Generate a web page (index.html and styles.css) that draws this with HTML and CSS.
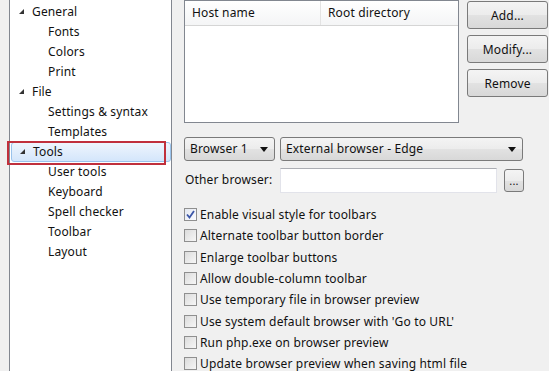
FILE: index.html
```html
<!DOCTYPE html>
<html lang="en">
<head>
<meta charset="UTF-8">
<title>Options</title>
<link rel="stylesheet" href="styles.css">
</head>
<body>

<div class="window">
    <!-- Category tree -->
    <ul class="tree">
        <li class="node"><span class="arrow"></span>General</li>
        <li class="leaf">Fonts</li>
        <li class="leaf">Colors</li>
        <li class="leaf">Print</li>
        <li class="node"><span class="arrow"></span>File</li>
        <li class="leaf">Settings &amp; syntax</li>
        <li class="leaf">Templates</li>
        <li class="node selected"><span class="arrow"></span>Tools<span class="mark"></span></li>
        <li class="leaf">User tools</li>
        <li class="leaf">Keyboard</li>
        <li class="leaf">Spell checker</li>
        <li class="leaf">Toolbar</li>
        <li class="leaf">Layout</li>
    </ul>

    <div class="main">
        <!-- Server list and buttons -->
        <div class="top">
            <div class="list">
                <div class="list-head">
                    <div class="col col-host">Host name</div>
                    <div class="col col-root">Root directory</div>
                </div>
            </div>
            <div class="buttons">
                <button class="btn">Add...</button>
                <button class="btn">Modify...</button>
                <button class="btn">Remove</button>
            </div>
        </div>

        <!-- Browser selection -->
        <div class="row">
            <div class="select sel-small">Browser 1<span class="caret"></span></div>
            <div class="select sel-big">External browser - Edge<span class="caret"></span></div>
        </div>
        <div class="row row-other">
            <label class="other-label">Other browser:</label>
            <div class="input"></div>
            <button class="btn btn-dots">...</button>
        </div>

        <!-- Options -->
        <ul class="checks">
            <li><span class="box checked"><svg width="9" height="9" viewBox="0 0 9 9"><path d="M1 4.5 L3.5 7.5 L8 1" fill="none" stroke="#3b56a8" stroke-width="1.8"/></svg></span>Enable visual style for toolbars</li>
            <li><span class="box"></span>Alternate toolbar button border</li>
            <li><span class="box"></span>Enlarge toolbar buttons</li>
            <li><span class="box"></span>Allow double-column toolbar</li>
            <li><span class="box"></span>Use temporary file in browser preview</li>
            <li><span class="box"></span>Use system default browser with 'Go to URL'</li>
            <li><span class="box"></span>Run php.exe on browser preview</li>
            <li><span class="box"></span>Update browser preview when saving html file</li>
        </ul>
    </div>
</div>

</body>
</html>
```

FILE: styles.css
```css
body {
    margin: 0;
    padding: 0;
    background-color: #f0f0f0;
    font-family: "Noto Sans", "Open Sans", sans-serif;
    font-size: 12px;
    letter-spacing: 0.15px;
    color: #111;
}

.window {
    display: flex;
    height: 371px;
    overflow: hidden;
}

/* tree */
.tree {
    list-style: none;
    margin: 0 0 0 9px;
    padding: 2px 0 0 0;
    width: 161px;
    background-color: #fff;
    border-left: 1px solid #828790;
    border-right: 1px solid #828790;
}

.tree li {
    position: relative;
    height: 20px;
    line-height: 20px;
    white-space: nowrap;
}

.tree .node {
    padding-left: 22px;
}

.tree .leaf {
    padding-left: 38px;
}

.arrow {
    position: absolute;
    left: 9px;
    top: 7px;
    width: 0;
    height: 0;
    border-left: 5px solid transparent;
    border-bottom: 5px solid #333;
}

.tree .selected {
    margin-left: 1px;
    padding-left: 21px;
    border: 1px solid #9ac3ec;
    border-radius: 3px;
    height: 18px;
    line-height: 18px;
    background: linear-gradient(#eef5fd, #d4e6fb);
}

.tree .selected .arrow {
    left: 8px;
    top: 6px;
}

.mark {
    position: absolute;
    left: -5px;
    top: -2px;
    width: 155px;
    height: 20px;
    border: 2px solid #c0303c;
}

/* right side */
.main {
    margin-left: 12px;
    width: 365px;
}

.top {
    display: flex;
    gap: 8px;
}

.list {
    width: 273px;
    height: 121px;
    background-color: #fff;
    border: 1px solid #828790;
}

.list-head {
    display: flex;
    height: 24px;
    line-height: 24px;
    background: linear-gradient(#fff, #f4f5f6);
    border-bottom: 1px solid #d5d5d5;
}

.col {
    padding-left: 7px;
    border-right: 1px solid #e3e3e3;
}

.col-host {
    width: 128px;
}

.col-root {
    flex: 1;
    border-right: none;
}

.buttons {
    display: flex;
    flex-direction: column;
    gap: 6px;
    padding-top: 1px;
}

.btn {
    width: 81px;
    height: 28px;
    padding: 0;
    font-family: inherit;
    font-size: 12px;
    letter-spacing: 0.15px;
    color: #111;
    border: 1px solid #7a7a7a;
    border-radius: 3px;
    background: linear-gradient(#f4f4f4 0%, #ececec 50%, #e2e2e2 51%, #d8d8d8 100%);
}

.row {
    display: flex;
    align-items: center;
    gap: 5px;
}

.top + .row {
    margin-top: 14px;
}

.select {
    position: relative;
    box-sizing: border-box;
    height: 24px;
    line-height: 22px;
    padding-left: 5px;
    border: 1px solid #7a7a7a;
    border-radius: 3px;
    background: linear-gradient(#f4f4f4 0%, #ececec 50%, #e2e2e2 51%, #d8d8d8 100%);
    white-space: nowrap;
}

.sel-small {
    width: 91px;
}

.sel-big {
    width: 243px;
}

.caret {
    position: absolute;
    right: 6px;
    top: 9px;
    width: 0;
    height: 0;
    border-left: 4px solid transparent;
    border-right: 4px solid transparent;
    border-top: 5px solid #111;
}

.row-other {
    margin-top: 7px;
    gap: 0;
}

.other-label {
    width: 95px;
    padding-left: 1px;
    margin-top: -2px;
}

.input {
    width: 215px;
    height: 23px;
    background-color: #fff;
    border: 1px solid #e2e3ea;
    border-top-color: #abadb3;
}

.btn-dots {
    width: 20px;
    height: 23px;
    margin-left: 7px;
    line-height: 14px;
    font-size: 11px;
}

/* checkboxes */
.checks {
    list-style: none;
    margin: 11px 0 0 0;
    padding: 0;
}

.checks li {
    display: flex;
    align-items: center;
    height: 21.3px;
    white-space: nowrap;
}

.box {
    display: flex;
    align-items: center;
    justify-content: center;
    box-sizing: border-box;
    width: 13px;
    height: 13px;
    margin-right: 3px;
    border: 1px solid #8f8f8f;
    background: linear-gradient(135deg, #dcdcdc, #f6f6f6);
}

.box.checked {
    background: linear-gradient(135deg, #e4e8f0, #fafbff);
}
```
